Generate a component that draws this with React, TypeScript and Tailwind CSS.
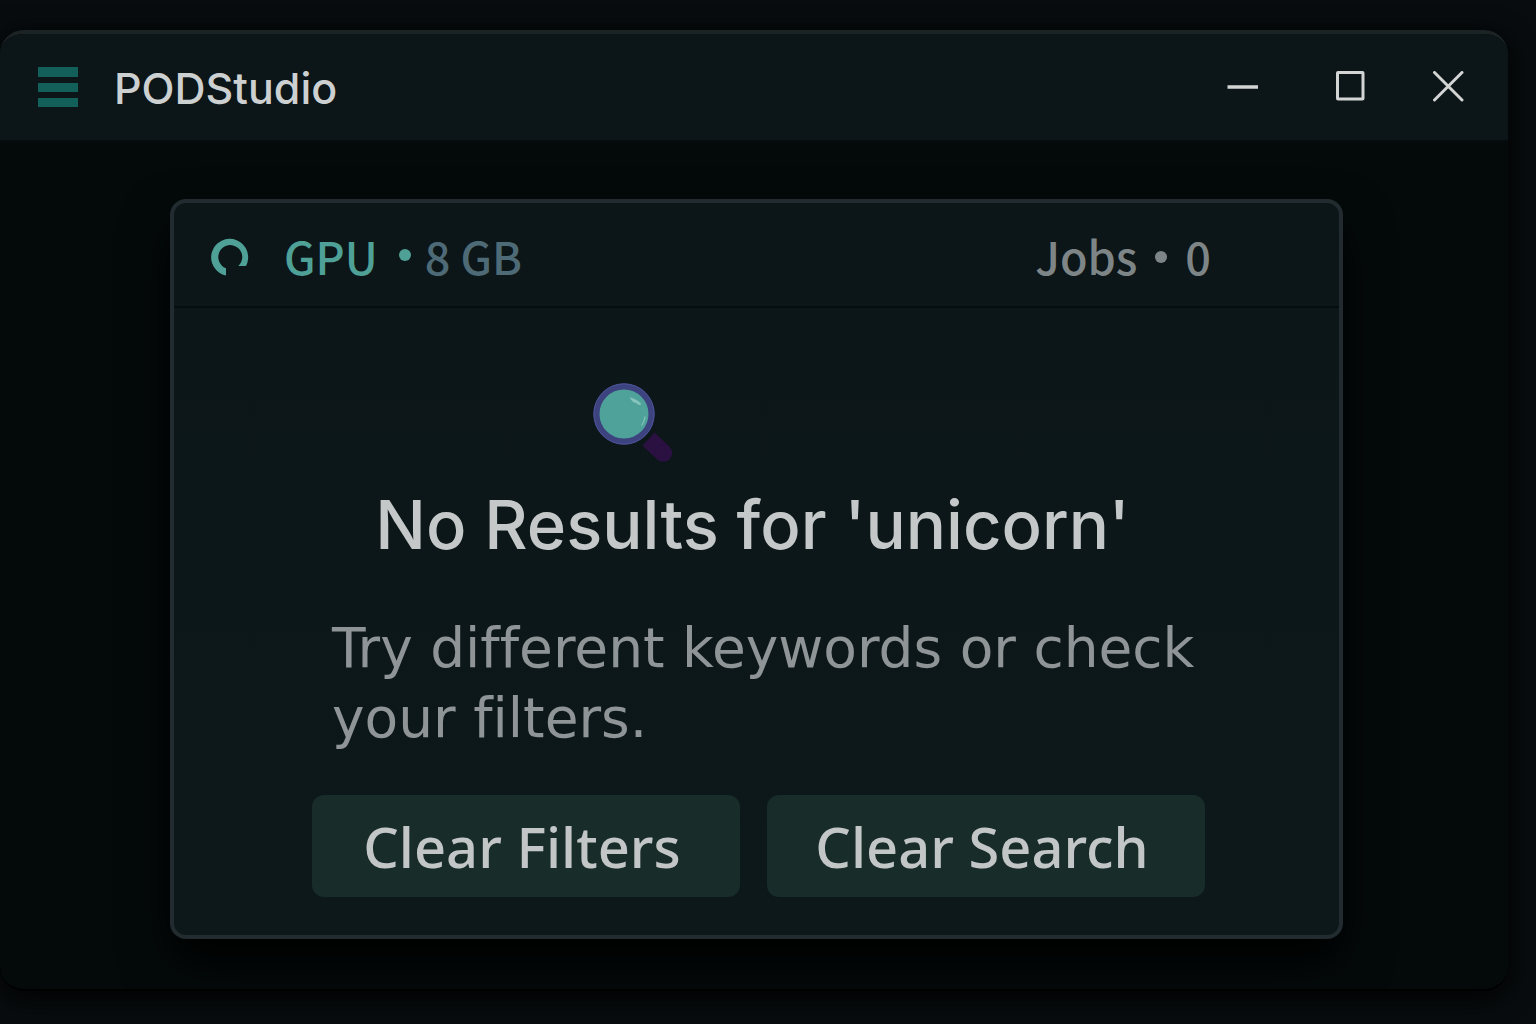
import React from "react";

function MenuIcon() {
  return (
    <svg className="block h-[42px] w-10" viewBox="0 0 40 42" fill="#126059" aria-hidden="true">
      <rect y="1" width="40" height="10" />
      <rect y="17" width="40" height="9" />
      <rect y="32" width="40" height="9" />
    </svg>
  );
}

function GpuIcon() {
  return (
    <svg className="block h-10 w-10" viewBox="0 0 40 40" fill="#4fa197" aria-hidden="true">
      <path d="M16 38.5 A18.5 18.5 0 1 1 36 29 L28.3 29 A12 12 0 1 0 16 31.3 Z" />
    </svg>
  );
}

function MagnifierIcon() {
  return (
    <svg className="block h-20 w-20" viewBox="0 0 80 80" aria-hidden="true">
      <path d="M55.5 56 L70.3 70" stroke="#2b1042" strokeWidth="17.6" />
      <circle cx="70.3" cy="70" r="8.8" fill="#2b1042" />
      <circle cx="31" cy="31" r="27.5" fill="#4fa299" stroke="#3d437f" strokeWidth="6" />
      <circle cx="31" cy="31" r="30.2" fill="none" stroke="#4c539a" strokeWidth="1" />
      <path d="M36.5 14.5 Q42 14.5 48.5 21 Q46 23.5 42.5 19.5 Q41 21 36.5 14.5 Z" fill="#86c4bd" />
      <path d="M52 34 Q51.5 38 49 42" fill="none" stroke="#7fc0b8" strokeWidth="1.4" strokeLinecap="round" />
    </svg>
  );
}

const controlStroke = { fill: "none", stroke: "#d3d5d5", strokeWidth: 3 };

function WindowControls() {
  return (
    <div className="flex items-center">
      <button type="button" aria-label="Minimize" className="mr-[75px]">
        <svg className="block h-8 w-8" viewBox="0 0 32 32" {...controlStroke} strokeWidth={3.4}>
          <path d="M0.5 16 H31" />
        </svg>
      </button>
      <button type="button" aria-label="Maximize" className="mr-[66px]">
        <svg className="block h-8 w-8" viewBox="0 0 32 32" {...controlStroke}>
          <rect x="3.5" y="1.5" width="25.5" height="26.5" rx="0.5" />
        </svg>
      </button>
      <button type="button" aria-label="Close">
        <svg className="block h-8 w-8" viewBox="0 0 32 32" {...controlStroke} strokeLinecap="round">
          <path d="M2.5 1.5 L30 29 M30 1.5 L2.5 29" />
        </svg>
      </button>
    </div>
  );
}

function ActionButton({ children }: { children: React.ReactNode }) {
  return (
    <button
      type="button"
      className="h-[102px] rounded-xl bg-[#182c2a] pr-2 text-center font-['Noto_Sans',sans-serif] text-[56px] leading-[76px] font-medium text-[#c3c6c6]"
    >
      {children}
    </button>
  );
}

export default function App() {
  return (
    <div className="min-h-screen bg-[#080c0e] pt-[30px] pr-7 pb-8 font-['Noto_Sans_CJK_SC',sans-serif]">
      <div className="overflow-hidden rounded-3xl border-t-4 border-b-2 border-t-[#1b2325] border-b-black bg-[#040a0a] pb-[50px] shadow-[0_6px_28px_#000000]">
        <header className="flex h-[108px] items-center border-b-2 border-[#060b0d] bg-[#0c1517] pr-11 pl-[38px]">
          <button type="button" aria-label="Menu">
            <MenuIcon />
          </button>
          <h1 className="ml-9 flex-1 pt-0.5 font-['Inter',sans-serif] text-[43px] leading-[52px] font-medium text-[#cdd0d0]">
            PODStudio
          </h1>
          <WindowControls />
        </header>

        <main className="mt-[57px] mr-[165px] ml-[170px] rounded-2xl border-4 border-[#222b2f] bg-linear-to-b from-[#0c1618] to-[#0d181a] shadow-[0_24px_48px_#000000]">
          <div className="flex h-[105px] items-center border-b-2 border-[#060d0f] pt-1 pr-32 pl-9 text-[45px] leading-[64px] font-medium">
            <GpuIcon />
            <span className="mb-0.5 ml-[34px] text-[#4fa197]">GPU</span>
            <span className="mb-1 ml-[21px] h-3 w-3 rounded-full bg-[#4fa197]" />
            <span className="mb-0.5 ml-[14px] text-[#4d6a76]">8 GB</span>
            <span className="mb-0.5 ml-auto text-[#7e8587]">Jobs</span>
            <span className="mx-[18px] h-3 w-3 rounded-full bg-[#7e8587]" />
            <span className="mb-0.5 text-[#7e8587]">0</span>
          </div>

          <section className="flex flex-col pt-[75px] pr-[134px] pb-[38px] pl-[138px]">
            <div className="mr-[252px] self-center">
              <MagnifierIcon />
            </div>
            <h2 className="mt-[22px] pr-3 text-center font-['Inter',sans-serif] text-[67px] leading-[80px] font-medium text-[#c5c8c8]">
              No Results for 'unicorn'
            </h2>
            <p className="mt-12 pl-5 font-['DejaVu_Sans',sans-serif] text-[55px] leading-[70px] text-[#8f9496] [font-variant-ligatures:none]">
              Try different keywords or check your filters.
            </p>
            <div className="mt-[42px] grid grid-cols-[428fr_438fr] gap-[27px]">
              <ActionButton>Clear Filters</ActionButton>
              <ActionButton>Clear Search</ActionButton>
            </div>
          </section>
        </main>
      </div>
    </div>
  );
}
